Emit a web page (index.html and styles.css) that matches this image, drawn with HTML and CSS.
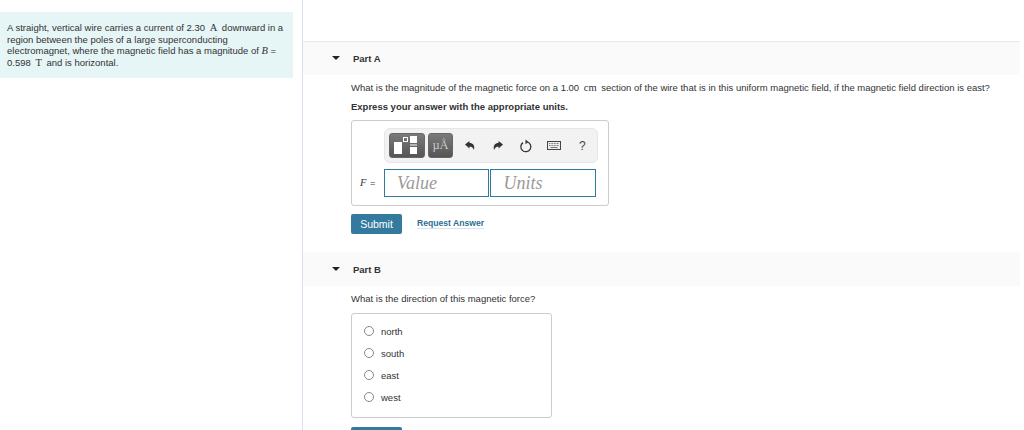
FILE: index.html
```html
<!DOCTYPE html>
<html lang="en">
<head>
    <meta charset="UTF-8">
    <title>Magnetic force on a wire</title>
    <link rel="stylesheet" href="styles.css">
</head>
<body>
    <div class="page">
        <aside class="sidebar">
            <div class="intro">
                A straight, vertical wire carries a current of 2.30 <span class="unit">A</span> downward in a region between the poles of a large superconducting electromagnet, where the magnetic field has a magnitude of <i class="var">B</i> = 0.598 <span class="unit">T</span> and is horizontal.
            </div>
        </aside>

        <main class="parts">
            <section class="part part-a">
                <header class="part-header">
                    <span class="caret"></span>
                    <h2>Part A</h2>
                </header>
                <div class="part-body">
                    <p class="question">What is the magnitude of the magnetic force on a 1.00 <span class="unit">cm</span> section of the wire that is in this uniform magnetic field, if the magnetic field direction is east?</p>
                    <p class="hint">Express your answer with the appropriate units.</p>

                    <div class="answer-box">
                        <div class="toolbar">
                            <button class="tool-btn tool-templates" aria-label="Templates">
                                <svg width="34" height="23" viewBox="0 0 34 23">
                                    <rect x="4" y="8" width="8" height="12" fill="#fff"/>
                                    <rect x="13.5" y="3.5" width="4" height="4" fill="none" stroke="#fff"/>
                                    <rect x="20" y="2" width="7" height="7" fill="#fff"/>
                                    <rect x="20" y="10.5" width="7" height="1" fill="#fff"/>
                                    <rect x="20" y="13" width="7" height="7" fill="#fff"/>
                                </svg>
                            </button>
                            <button class="tool-btn tool-symbols">&micro;&Aring;</button>
                            <svg class="tool-icon undo" width="12" height="12" viewBox="0 0 12 12">
                                <path d="M1 4.5 L5.5 1 V3 C9 3 11 5.5 10 10 C9 7.5 7.5 6.5 5.5 6.5 V8.5 Z" fill="#333"/>
                            </svg>
                            <svg class="tool-icon redo" width="12" height="12" viewBox="0 0 12 12">
                                <path d="M11 4.5 L6.5 1 V3 C3 3 1 5.5 2 10 C3 7.5 4.5 6.5 6.5 6.5 V8.5 Z" fill="#333"/>
                            </svg>
                            <svg class="tool-icon reset" width="14" height="14" viewBox="0 0 14 14">
                                <path d="M8.5 3 A5 5 0 1 1 4 3.6" fill="none" stroke="#333" stroke-width="1.3"/>
                                <path d="M6.5 0.5 L9.5 3 L6.5 5.2 Z" fill="#333"/>
                            </svg>
                            <svg class="tool-icon keyboard" width="14" height="9" viewBox="0 0 14 9">
                                <rect x="0.5" y="0.5" width="13" height="8" fill="#eee" stroke="#444"/>
                                <path d="M2 2.5 H12 M2 4.5 H12" stroke="#777" stroke-dasharray="1 0.6"/>
                                <path d="M3.5 6.5 H10.5" stroke="#777"/>
                            </svg>
                            <span class="tool-help">?</span>
                        </div>
                        <div class="answer-row">
                            <label class="answer-label"><i class="var">F</i> =</label>
                            <div class="field">Value</div>
                            <div class="field">Units</div>
                        </div>
                    </div>

                    <div class="actions">
                        <button class="submit-btn">Submit</button>
                        <a class="request-link" href="#">Request Answer</a>
                    </div>
                </div>
            </section>

            <section class="part part-b">
                <header class="part-header">
                    <span class="caret"></span>
                    <h2>Part B</h2>
                </header>
                <div class="part-body">
                    <p class="question">What is the direction of this magnetic force?</p>
                    <div class="choices">
                        <div class="choice"><span class="radio"></span>north</div>
                        <div class="choice"><span class="radio"></span>south</div>
                        <div class="choice"><span class="radio"></span>east</div>
                        <div class="choice"><span class="radio"></span>west</div>
                    </div>
                    <button class="submit-btn submit-cut" aria-label="Submit"></button>
                </div>
            </section>
        </main>
    </div>
</body>
</html>
```

FILE: styles.css
```css
* {
    margin: 0;
    padding: 0;
    box-sizing: border-box;
}

html, body {
    height: 430px;
    overflow: hidden;
}

body {
    font-family: "Liberation Sans", Arial, sans-serif;
    font-size: 9.5px;
    color: #333;
    background-color: #fff;
}

.page {
    display: flex;
    height: 430px;
}

.unit, .var {
    display: inline-block;
    font-family: "Liberation Serif", serif;
    font-size: 10.5px;
    line-height: 10px;
    height: 10px;
}

.unit {
    margin: 0 2px;
}

/* left column */
.sidebar {
    width: 303px;
    flex-shrink: 0;
    padding-top: 12px;
    border-right: 1px solid #d9e2ec;
}

.intro {
    width: 293px;
    height: 66px;
    padding: 10px 7px 0;
    background-color: #e6f5f6;
    line-height: 11.7px;
}

/* parts */
.parts {
    width: 717px;
    padding-top: 41px;
}

.part-header {
    display: flex;
    align-items: center;
    height: 34px;
    padding-left: 29px;
    background-color: #fafafa;
    border-top: 1px solid #e8e8e8;
}

.part-a .part-header {
    padding-bottom: 1px;
}

.part-b .part-header {
    border-top: none;
}

.caret {
    width: 0;
    height: 0;
    border-left: 4px solid transparent;
    border-right: 4px solid transparent;
    border-top: 4px solid #222;
    margin-right: 13px;
}

.part-header h2 {
    font-size: 9.5px;
    font-weight: bold;
    color: #333;
}

.part-body {
    padding: 7px 0 0 48px;
}

.question {
    line-height: 12px;
}

.hint {
    margin-top: 7px;
    font-weight: bold;
    line-height: 12px;
}

/* answer box */
.answer-box {
    width: 258px;
    height: 86px;
    margin-top: 7px;
    padding: 7px 11px 0 8px;
    border: 1px solid #ccc;
    border-radius: 3px;
}

.toolbar {
    display: flex;
    align-items: center;
    width: 214px;
    height: 35px;
    margin-left: 24px;
    padding-left: 4px;
    background-color: #f2f2f2;
    border: 1px solid #e6e6e6;
    border-radius: 6px;
}

.tool-btn {
    height: 25px;
    background: linear-gradient(#7a7a7a, #555);
    border: 1px solid #666;
    border-radius: 3px;
    color: #ccc;
    font-family: "Liberation Serif", serif;
}

.tool-templates {
    width: 36px;
    margin-right: 3px;
}

.tool-templates svg {
    display: block;
}

.tool-symbols {
    width: 25px;
    font-size: 12.5px;
    margin-right: 11px;
}

.tool-icon {
    flex-shrink: 0;
}

.redo {
    margin-left: 16px;
}

.reset {
    margin-left: 15px;
}

.keyboard {
    margin-left: 14px;
}

.tool-help {
    margin-left: 18px;
    font-size: 12px;
    color: #444;
}

.answer-row {
    display: flex;
    align-items: center;
    margin-top: 6px;
}

.answer-label {
    width: 24px;
    font-size: 9px;
    word-spacing: 1px;
}

.field {
    width: 106px;
    height: 28px;
    margin-right: 1px;
    padding-left: 12px;
    border: 1px solid #2f7a9e;
    font-family: "Liberation Serif", serif;
    font-style: italic;
    font-size: 18px;
    line-height: 26px;
    color: #999;
}

/* buttons */
.actions {
    display: flex;
    align-items: center;
    margin-top: 8px;
}

.submit-btn {
    width: 51px;
    height: 20px;
    background-color: #337a9e;
    border: none;
    border-radius: 2px;
    color: #fff;
    font-family: "Liberation Sans", Arial, sans-serif;
    font-size: 10.5px;
}

.request-link {
    margin-left: 15px;
    margin-bottom: 2px;
    font-size: 8.6px;
    font-weight: bold;
    color: #2d6f92;
    text-decoration: none;
    border-bottom: 1px solid #d5e6f0;
}

/* part b */
.part-b {
    margin-top: 18px;
}

.choices {
    width: 201px;
    height: 105px;
    margin-top: 8px;
    padding: 6px 0 0 12px;
    border: 1px solid #ccc;
    border-radius: 3px;
}

.choice {
    display: flex;
    align-items: center;
    height: 22px;
}

.radio {
    width: 10px;
    height: 10px;
    margin-right: 7px;
    border: 1px solid #888;
    border-radius: 50%;
}

/* only the top of this button is inside the window */
.submit-cut {
    display: block;
    height: 3px;
    margin-top: 9px;
    border-radius: 2px 2px 0 0;
}
```
